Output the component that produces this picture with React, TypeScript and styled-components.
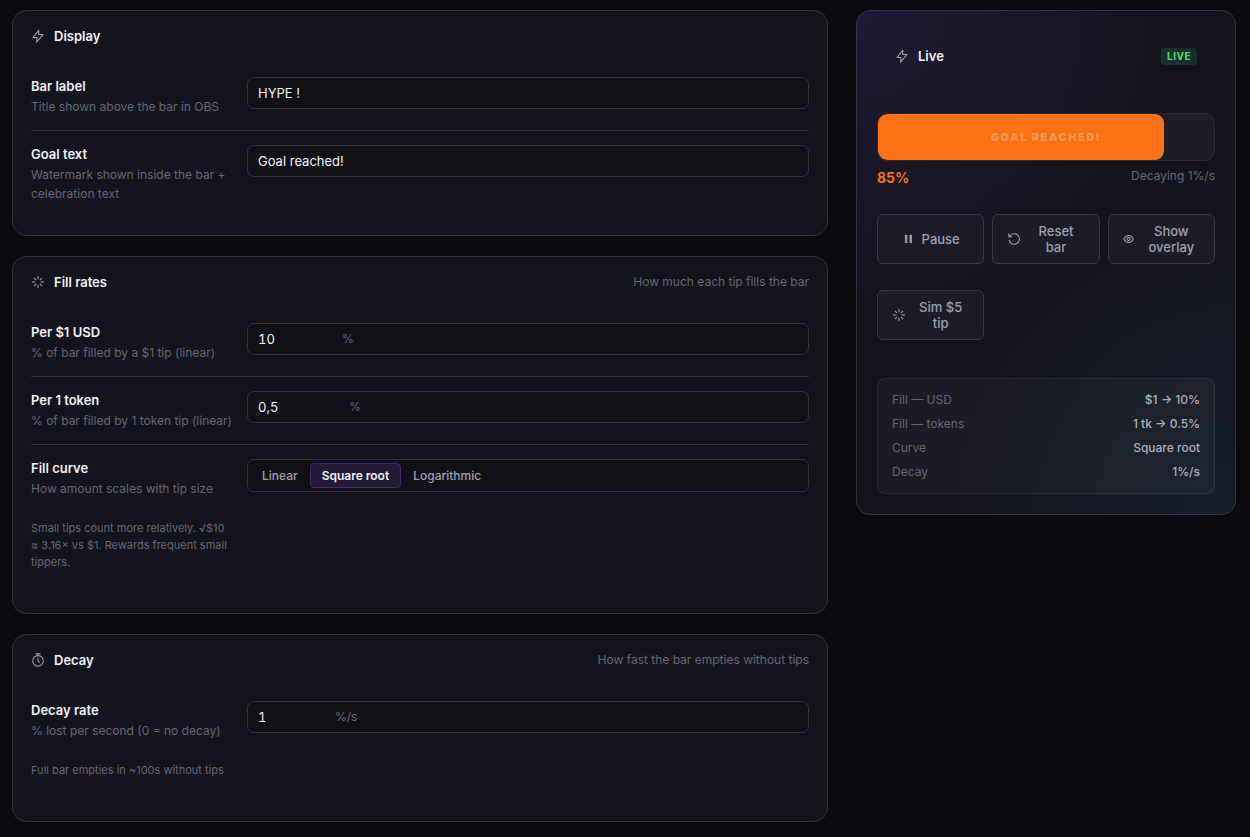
import React, { useState } from "react";
import styled, { createGlobalStyle, css } from "styled-components";

const GlobalStyle = createGlobalStyle`
  *, *::before, *::after { box-sizing: border-box; }
  body {
    margin: 0;
    background: #0b0a0f;
    color: #f1f1f5;
    font-family: Inter, "Liberation Sans", sans-serif;
    font-size: 13px;
    line-height: 20px;
  }
  button, input { font: inherit; }
`;

const Page = styled.main`
  display: grid;
  grid-template-columns: minmax(0, 1fr) 380px;
  gap: 28px;
  align-items: start;
  padding: 10px 14px 14px 12px;
`;

const Column = styled.div`
  display: flex;
  flex-direction: column;
  gap: 20px;
`;

const Card = styled.section`
  border: 1px solid #32323b;
  border-radius: 14px;
  background: #14141d;
`;

const CardHead = styled.header`
  display: flex;
  align-items: center;
  gap: 9px;
  padding: 15px 18px;
  color: #a0a0ae;
`;

const CardTitle = styled.h2`
  margin: 0;
  color: #f1f1f5;
  font-size: 13px;
  font-weight: 600;
  line-height: 20px;
`;

const CardNote = styled.span`
  margin-left: auto;
  color: #666673;
  font-size: 12px;
`;

const CardBody = styled.div<{ $tall?: boolean }>`
  padding: 2px 18px ${(p) => (p.$tall ? 28 : 18)}px;
`;

const Row = styled.div`
  display: grid;
  grid-template-columns: 206px minmax(0, 1fr);
  gap: 10px;
  align-items: start;
  padding: 14px 0;

  & + & {
    border-top: 1px solid #32323b;
  }
`;

const Label = styled.label`
  display: block;
  padding-bottom: 2px;
  font-weight: 600;
  line-height: 18px;
`;

const Help = styled.p`
  margin: 0;
  color: #666673;
  font-size: 12px;
  line-height: 19px;
`;

const Hint = styled.p`
  margin: 22px 0 0;
  padding-right: 8px;
  color: #666673;
  font-size: 11px;
  line-height: 17px;
`;

const field = css`
  border: 1px solid #32323b;
  border-radius: 7px;
  background: #101017;
`;

const TextInput = styled.input`
  ${field}
  width: 100%;
  height: 32px;
  padding: 0 10px;
  color: #f1f1f5;
  outline: none;
`;

const NumberBox = styled.div`
  ${field}
  display: flex;
  align-items: center;
  gap: 8px;
  height: 32px;
  padding: 0 10px;
`;

const NumberInput = styled.input`
  padding: 0;
  border: 0;
  background: none;
  color: #f1f1f5;
  font-variant-numeric: tabular-nums;
  outline: none;
`;

const Unit = styled.span`
  color: #666673;
  font-size: 12px;
`;

const Segments = styled.div`
  ${field}
  display: flex;
  padding: 3px 2px;
`;

const Segment = styled.button<{ $active: boolean }>`
  height: 25px;
  padding: 0 11px;
  border: 1px solid ${(p) => (p.$active ? "#412a6b" : "transparent")};
  border-radius: 4px;
  background: ${(p) => (p.$active ? "#231a38" : "transparent")};
  color: ${(p) => (p.$active ? "#f1f1f5" : "#a0a0ae")};
  font-size: 12px;
  font-weight: ${(p) => (p.$active ? 600 : 500)};
  cursor: pointer;
`;

const LiveCard = styled(Card)`
  padding: 20px;
  border-color: #34343e;
  background:
    radial-gradient(circle at 0% 0%, rgba(124, 77, 255, 0.11), transparent 48%),
    radial-gradient(circle at 100% 100%, rgba(45, 120, 150, 0.11), transparent 45%),
    #14141d;
`;

const LiveHead = styled(CardHead)`
  margin-bottom: 32px;
`;

const LiveBadge = styled.span`
  margin-left: auto;
  padding: 0 6px;
  border-radius: 4px;
  background: #1a2e2b;
  color: #4ade80;
  font-size: 10px;
  font-weight: 700;
  letter-spacing: 0.5px;
  line-height: 17px;
`;

const Meter = styled.div`
  display: grid;
  height: 48px;
  overflow: hidden;
  border: 1px solid #2a2a34;
  border-radius: 10px;
  background: #1d1d26;
`;

const MeterFill = styled.div`
  grid-area: 1 / 1;
  border-radius: 9px;
  background: #f97316;
`;

const MeterText = styled.span`
  grid-area: 1 / 1;
  place-self: center;
  color: rgba(255, 255, 255, 0.25);
  font-size: 11px;
  font-weight: 900;
  letter-spacing: 1.5px;
  text-transform: uppercase;
`;

const MeterInfo = styled.div`
  display: flex;
  justify-content: space-between;
  margin-top: 6px;
`;

const Percent = styled.strong`
  color: #f97316;
  font-size: 14px;
  font-weight: 700;
  font-variant-numeric: tabular-nums;
  line-height: 22px;
`;

const DecayNote = styled.span`
  color: #666673;
  font-size: 12px;
  line-height: 18px;
`;

const Actions = styled.div`
  display: grid;
  grid-template-columns: repeat(3, minmax(0, 1fr));
  gap: 26px 8px;
  margin: 25px 0 38px;
`;

const ActionButton = styled.button`
  display: flex;
  align-items: center;
  justify-content: center;
  gap: 6px;
  min-height: 50px;
  padding: 8px 14px;
  border: 1px solid #383843;
  border-radius: 6px;
  background: #1c1c26;
  color: #a0a0ae;
  font-size: 13px;
  font-weight: 500;
  line-height: 16px;
  text-align: center;
  cursor: pointer;

  svg { flex: none; }
`;

const Summary = styled.dl`
  margin: 0;
  padding: 9px 14px;
  border: 1px solid rgba(255, 255, 255, 0.07);
  border-radius: 8px;
  background: rgba(255, 255, 255, 0.03);
`;

const SummaryRow = styled.div`
  display: flex;
  justify-content: space-between;
  font-size: 12px;
  line-height: 24px;

  dt { color: #666673; }
  dd { margin: 0; color: #b0b0bc; font-weight: 500; }
`;

type IconProps = { size?: number; children: React.ReactNode };

const Icon = ({ size = 14, children }: IconProps) => (
  <svg
    width={size}
    height={size}
    viewBox="0 0 24 24"
    fill="none"
    stroke="currentColor"
    strokeWidth="1.8"
    strokeLinecap="round"
    strokeLinejoin="round"
    aria-hidden="true"
  >
    {children}
  </svg>
);

const BoltIcon = () => (
  <Icon>
    <path d="M13.5 2 3.5 14.5h7L9.5 22.5l11-13h-7.5z" />
  </Icon>
);

const BurstIcon = () => (
  <Icon>
    <path d="M12 2.5v4.5M12 17v4.5M2.5 12H7M17 12h4.5M5.5 5.5l2.5 2.5M16 16l2.5 2.5M5.5 18.5l2.5-2.5M16 8l2.5-2.5" />
  </Icon>
);

const TimerIcon = () => (
  <Icon>
    <circle cx="12" cy="13.5" r="9" />
    <path d="M12 9v4.5l2.5 2.5M8.5 1.5h7M12 1.5v3" />
  </Icon>
);

const PauseIcon = () => (
  <Icon>
    <g fill="currentColor" stroke="none">
      <rect x="5" y="5" width="4" height="14" />
      <rect x="13" y="5" width="4" height="14" />
    </g>
  </Icon>
);

const ResetIcon = () => (
  <Icon>
    <path d="M3.5 14a9 9 0 1 0 2.5-8.5L3 8M3 3v5h5" />
  </Icon>
);

const EyeIcon = () => (
  <Icon>
    <path d="M1.5 12s2.5-6 8-6 8 6 8 6-2.5 6-8 6-8-6-8-6z" />
    <circle cx="9.5" cy="12" r="2.8" />
  </Icon>
);

type TextFieldProps = { id: string; label: string; help: string; initial: string };

function TextField({ id, label, help, initial }: TextFieldProps) {
  const [value, setValue] = useState(initial);
  return (
    <Row>
      <div>
        <Label htmlFor={id}>{label}</Label>
        <Help>{help}</Help>
      </div>
      <TextInput id={id} value={value} onChange={(e) => setValue(e.target.value)} />
    </Row>
  );
}

type NumberFieldProps = TextFieldProps & { unit: string; hint?: string };

function NumberField({ id, label, help, initial, unit, hint }: NumberFieldProps) {
  const [value, setValue] = useState(initial);
  return (
    <Row>
      <div>
        <Label htmlFor={id}>{label}</Label>
        <Help>{help}</Help>
        {hint && <Hint>{hint}</Hint>}
      </div>
      <NumberBox>
        <NumberInput
          id={id}
          inputMode="decimal"
          value={value}
          onChange={(e) => setValue(e.target.value)}
          style={{ width: 62 + value.length * 7 }}
        />
        <Unit>{unit}</Unit>
      </NumberBox>
    </Row>
  );
}

const curves = ["Linear", "Square root", "Logarithmic"];

export default function App() {
  const [curve, setCurve] = useState("Square root");
  const percent = 85;
  const summary = [
    ["Fill — USD", "$1 → 10%"],
    ["Fill — tokens", "1 tk → 0.5%"],
    ["Curve", curve],
    ["Decay", "1%/s"],
  ];

  return (
    <>
      <GlobalStyle />
      <Page>
        <Column>
          <Card>
            <CardHead>
              <BoltIcon />
              <CardTitle>Display</CardTitle>
            </CardHead>
            <CardBody>
              <TextField id="bar-label" label="Bar label" help="Title shown above the bar in OBS" initial="HYPE !" />
              <TextField
                id="goal-text"
                label="Goal text"
                help="Watermark shown inside the bar + celebration text"
                initial="Goal reached!"
              />
            </CardBody>
          </Card>

          <Card>
            <CardHead>
              <BurstIcon />
              <CardTitle>Fill rates</CardTitle>
              <CardNote>How much each tip fills the bar</CardNote>
            </CardHead>
            <CardBody $tall>
              <NumberField id="per-usd" label="Per $1 USD" help="% of bar filled by a $1 tip (linear)" initial="10" unit="%" />
              <NumberField
                id="per-token"
                label="Per 1 token"
                help="% of bar filled by 1 token tip (linear)"
                initial="0,5"
                unit="%"
              />
              <Row>
                <div>
                  <Label as="span" id="curve-label">Fill curve</Label>
                  <Help>How amount scales with tip size</Help>
                  <Hint>Small tips count more relatively. √$10 ≈ 3.16× vs $1. Rewards frequent small tippers.</Hint>
                </div>
                <Segments role="group" aria-labelledby="curve-label">
                  {curves.map((name) => (
                    <Segment
                      key={name}
                      type="button"
                      $active={name === curve}
                      aria-pressed={name === curve}
                      onClick={() => setCurve(name)}
                    >
                      {name}
                    </Segment>
                  ))}
                </Segments>
              </Row>
            </CardBody>
          </Card>

          <Card>
            <CardHead>
              <TimerIcon />
              <CardTitle>Decay</CardTitle>
              <CardNote>How fast the bar empties without tips</CardNote>
            </CardHead>
            <CardBody $tall>
              <NumberField
                id="decay-rate"
                label="Decay rate"
                help="% lost per second (0 = no decay)"
                initial="1"
                unit="%/s"
                hint="Full bar empties in ~100s without tips"
              />
            </CardBody>
          </Card>
        </Column>

        <LiveCard>
          <LiveHead>
            <BoltIcon />
            <CardTitle>Live</CardTitle>
            <LiveBadge>LIVE</LiveBadge>
          </LiveHead>
          <Meter role="progressbar" aria-valuenow={percent} aria-valuemin={0} aria-valuemax={100} aria-label="Hype bar">
            <MeterFill style={{ width: `${percent}%` }} />
            <MeterText>Goal reached!</MeterText>
          </Meter>
          <MeterInfo>
            <Percent>{percent}%</Percent>
            <DecayNote>Decaying 1%/s</DecayNote>
          </MeterInfo>
          <Actions>
            <ActionButton type="button"><PauseIcon /><span>Pause</span></ActionButton>
            <ActionButton type="button"><ResetIcon /><span>Reset bar</span></ActionButton>
            <ActionButton type="button"><EyeIcon /><span>Show overlay</span></ActionButton>
            <ActionButton type="button"><BurstIcon /><span>Sim $5 tip</span></ActionButton>
          </Actions>
          <Summary>
            {summary.map(([term, value]) => (
              <SummaryRow key={term}>
                <dt>{term}</dt>
                <dd>{value}</dd>
              </SummaryRow>
            ))}
          </Summary>
        </LiveCard>
      </Page>
    </>
  );
}
